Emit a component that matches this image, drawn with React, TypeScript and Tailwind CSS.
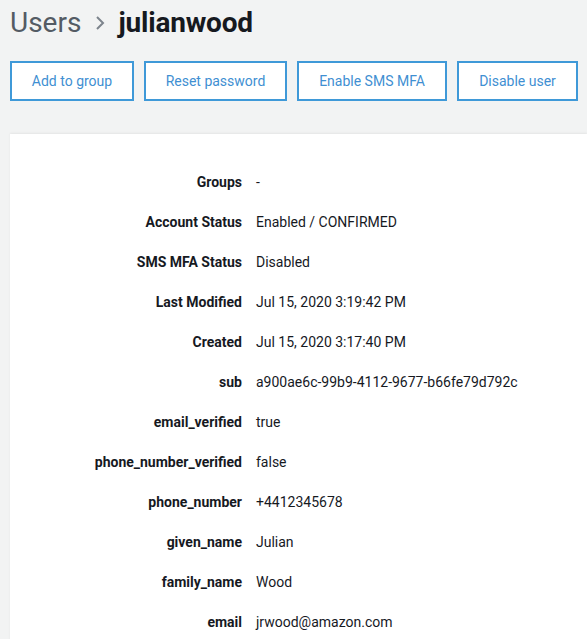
import React from "react";

const rows: [string, string][] = [
    ["Groups", "-"],
    ["Account Status", "Enabled / CONFIRMED"],
    ["SMS MFA Status", "Disabled"],
    ["Last Modified", "Jul 15, 2020 3:19:42 PM"],
    ["Created", "Jul 15, 2020 3:17:40 PM"],
    ["sub", "a900ae6c-99b9-4112-9677-b66fe79d792c"],
    ["email_verified", "true"],
    ["phone_number_verified", "false"],
    ["phone_number", "+4412345678"],
    ["given_name", "Julian"],
    ["family_name", "Wood"],
    ["email", "jrwood@amazon.com"],
];

const actions = [
    { label: "Add to group", w: "w-[124px]" },
    { label: "Reset password", w: "w-[143px]" },
    { label: "Enable SMS MFA", w: "w-[150px]" },
    { label: "Disable user", w: "w-[121px]" },
];

export default function App() {
    return (
        <div className="min-h-[639px] w-[587px] overflow-hidden bg-[#f2f3f3] font-['Roboto',sans-serif] text-[#16191f]">
            <div className="flex items-center h-[44px] pl-[10px] pt-[1px]">
                <span className="text-[28px] text-[#545b64] leading-none">Users</span>
                <svg className="ml-[14px] mr-[13px]" width="10" height="16" viewBox="0 0 10 16" fill="none">
                    <path d="M2 2 L8 8 L2 14" stroke="#7d848c" strokeWidth="2" />
                </svg>
                <span className="text-[28px] font-bold leading-none tracking-[-0.2px]">julianwood</span>
            </div>

            <div className="flex gap-[10px] pl-[10px] mt-[17px]">
                {actions.map((a) => (
                    <button
                        key={a.label}
                        className={`${a.w} h-[40px] bg-white border-2 border-[#3f99d8] text-[#3f8fd2] text-[14px]`}
                    >
                        {a.label}
                    </button>
                ))}
            </div>

            <div className="ml-[10px] mt-[33px] bg-white shadow-[0_-1px_2px_rgba(0,0,0,0.06)] pt-[28px] pb-[20px]">
                {rows.map(([k, v]) => (
                    <div key={k} className="flex items-center h-[40px] text-[14px]">
                        <div className="w-[232px] text-right font-bold">{k}</div>
                        <div className="ml-[14px]">{v}</div>
                    </div>
                ))}
            </div>
        </div>
    );
}
